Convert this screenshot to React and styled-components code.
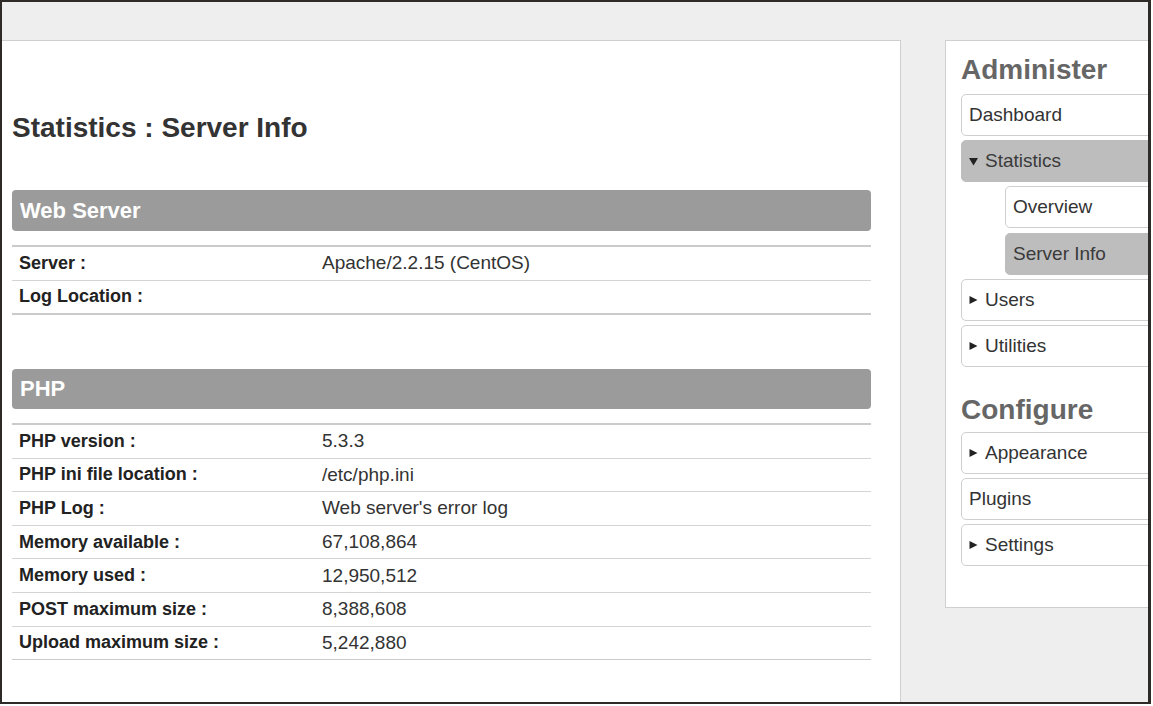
import React from "react";
import styled, {createGlobalStyle} from "styled-components";

const GlobalStyle = createGlobalStyle`
  html, body {
    margin: 0;
    padding: 0;
    background: #fff;
    font-family: "Liberation Sans", Arial, sans-serif;
  }
`

const Frame = styled.div`
  box-sizing: border-box;
  width: 1151px;
  height: 704px;
  border: 2px solid #2e2a28;
  border-right-width: 3px;
  background: #eeeeee;
  overflow: hidden;
  display: flex;
  align-items: flex-start;
  padding-top: 38px;
`

const Main = styled.main`
  box-sizing: border-box;
  flex: 0 0 899px;
  min-height: 700px;
  background: #fff;
  border-top: 1px solid #cfcfcf;
  border-right: 1px solid #cfcfcf;
  padding: 0 29px 0 10px;
`

const Title = styled.h1`
  margin: 71px 0 46px;
  font-size: 28px;
  line-height: 32px;
  font-weight: bold;
  color: #333;
`

const SectionHeader = styled.h2`
  margin: 0;
  height: ${props => props.height || 41}px;
  line-height: ${props => props.height || 41}px;
  background: #9b9b9b;
  border-radius: 4px;
  color: #fff;
  font-size: 22px;
  font-weight: bold;
  padding-left: 8px;
`

const InfoTable = styled.table`
  width: 100%;
  border-collapse: collapse;
  margin: 14px 0 ${props => props.gap || 0}px;
  border-top: 2px solid #cbcbcb;
  border-bottom: ${props => props.bottom || 1}px solid #cbcbcb;
`

const Row = styled.tr`
  & + & td {
    border-top: 1px solid #d4d4d4;
  }
`

const Label = styled.td`
  width: 289px;
  height: ${props => props.h || 32}px;
  padding: 0 7px;
  font-size: 18px;
  font-weight: bold;
  color: #222;
`

const Value = styled.td`
  padding: 0 7px;
  font-size: 19px;
  color: #333;
`

const Sidebar = styled.aside`
  box-sizing: border-box;
  flex: 0 0 260px;
  margin-left: 44px;
  height: 568px;
  background: #fff;
  border: 1px solid #cfcfcf;
  padding: 13px 0 0 15px;
`

const SideHeading = styled.h3`
  margin: ${props => props.top || 0}px 0 ${props => props.bottom || 8}px;
  font-size: 28px;
  line-height: 32px;
  font-weight: bold;
  color: #666;
`

const NavItem = styled.div`
  box-sizing: border-box;
  height: 42px;
  margin: 0 0 4.2px ${props => (props.sub ? 44 : 0)}px;
  border: 1px solid ${props => (props.active ? "#bdbdbd" : "#cfcfcf")};
  border-radius: 5px;
  background: ${props => (props.active ? "#bdbdbd" : "#fff")};
  display: flex;
  align-items: center;
  padding-left: 7px;
  font-size: 19px;
  color: ${props => (props.active ? "#3a3a3a" : "#333")};
`

const Arrow = styled.svg`
  width: 9px;
  height: 10px;
  margin-right: 7px;
  flex: none;
`

function Caret({open}) {
	return (
		<Arrow viewBox="0 0 9 10">
			{open
				? <path d="M0 2 L9 2 L4.5 9.5 Z" fill="#222"/>
				: <path d="M0.5 1 L8.5 5 L0.5 9 Z" fill="#222"/>}
		</Arrow>
	)
}

const webServer = [
	["Server :", "Apache/2.2.15 (CentOS)"],
	["Log Location :", ""],
]

const php = [
	["PHP version :", "5.3.3"],
	["PHP ini file location :", "/etc/php.ini"],
	["PHP Log :", "Web server's error log"],
	["Memory available :", "67,108,864"],
	["Memory used :", "12,950,512"],
	["POST maximum size :", "8,388,608"],
	["Upload maximum size :", "5,242,880"],
]

function App() {
	return (
		<>
			<GlobalStyle/>
			<Frame>
				<Main>
					<Title>Statistics : Server Info</Title>
					<SectionHeader>Web Server</SectionHeader>
					<InfoTable gap={54} bottom={2}>
						<tbody>
						{webServer.map(([k, v]) => (
							<Row key={k}><Label h={32.5}>{k}</Label><Value>{v}</Value></Row>
						))}
						</tbody>
					</InfoTable>
					<SectionHeader height={40}>PHP</SectionHeader>
					<InfoTable>
						<tbody>
						{php.map(([k, v]) => (
							<Row key={k}><Label h={32.6}>{k}</Label><Value>{v}</Value></Row>
						))}
						</tbody>
					</InfoTable>
				</Main>
				<Sidebar>
					<SideHeading>Administer</SideHeading>
					<NavItem>Dashboard</NavItem>
					<NavItem active><Caret open/>Statistics</NavItem>
					<NavItem sub>Overview</NavItem>
					<NavItem sub active>Server Info</NavItem>
					<NavItem><Caret/>Users</NavItem>
					<NavItem><Caret/>Utilities</NavItem>
					<SideHeading top={27} bottom={6}>Configure</SideHeading>
					<NavItem><Caret/>Appearance</NavItem>
					<NavItem>Plugins</NavItem>
					<NavItem><Caret/>Settings</NavItem>
				</Sidebar>
			</Frame>
		</>
	);
}

export default App;
